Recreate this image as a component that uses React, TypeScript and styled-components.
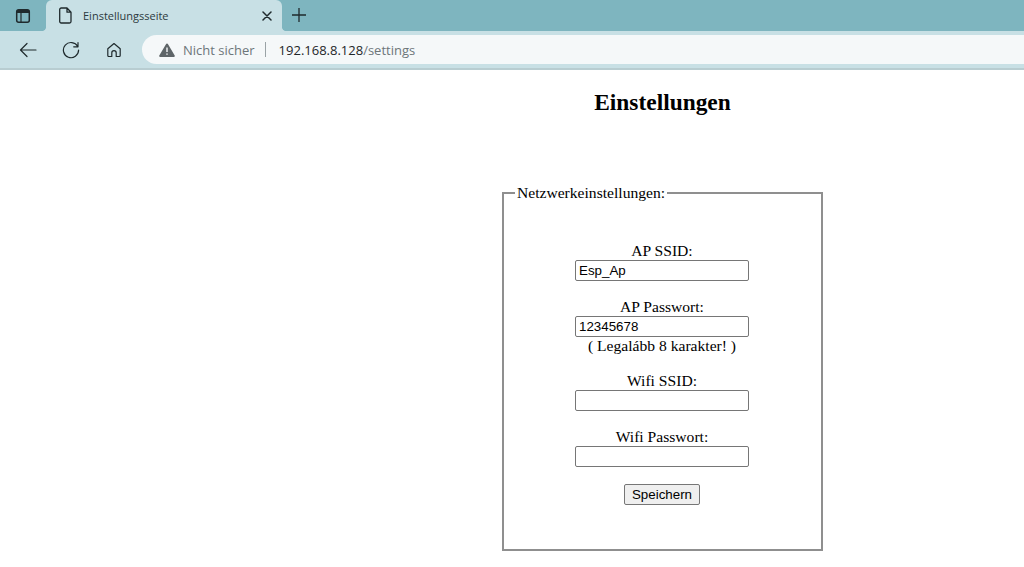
import React from "react";
import styled, { createGlobalStyle } from "styled-components";

const Global = createGlobalStyle`
  html, body { margin: 0; padding: 0; background: #fff; overflow: hidden; }
  #root { width: 1024px; height: 567px; overflow: hidden; }
`;

const Page = styled.div`
  width: 1024px;
  height: 567px;
  display: flex;
  flex-direction: column;
  background: #fff;
`;

const TabStrip = styled.div`
  height: 31px;
  flex: none;
  background: #7eb5bf;
  display: flex;
  align-items: stretch;
`;

const TabMenu = styled.div`
  width: 46px;
  flex: none;
  display: flex;
  align-items: center;
  justify-content: center;
  padding-right: 1px;
  box-sizing: border-box;
`;

const Tab = styled.div`
  position: relative;
  width: 236px;
  flex: none;
  background: #c8e0e5;
  border-radius: 6px 6px 0 0;
  display: flex;
  align-items: center;
  box-sizing: border-box;
  padding: 0 10px 0 13px;
  font: 11px "Open Sans", "Noto Sans", sans-serif;
  color: #2c3a3e;

  &::before,
  &::after {
    content: "";
    position: absolute;
    bottom: 0;
    width: 4px;
    height: 4px;
  }
  &::before {
    left: -4px;
    background: radial-gradient(circle at 0 0, #7eb5bf 3.6px, #c8e0e5 4.4px);
  }
  &::after {
    right: -4px;
    background: radial-gradient(circle at 100% 0, #7eb5bf 3.6px, #c8e0e5 4.4px);
  }
`;

const TabTitle = styled.span`
  margin-left: 11px;
  flex: 1;
`;

const NewTab = styled.div`
  width: 34px;
  display: flex;
  align-items: center;
  justify-content: center;
  padding-bottom: 2px;
`;

const Toolbar = styled.div`
  height: 37px;
  flex: none;
  background: #c8e0e5;
  display: flex;
  align-items: center;
  box-sizing: border-box;
  padding: 0 0 0 10px;
`;

const NavButton = styled.div`
  width: 36px;
  height: 32px;
  margin-right: 7px;
  display: flex;
  align-items: center;
  justify-content: center;
  flex: none;
`;

const Omnibox = styled.div`
  flex: 1;
  height: 29px;
  margin-left: 3px;
  background: #f5f8f9;
  border-radius: 15px 0 0 15px;
  display: flex;
  align-items: center;
  padding-left: 17px;
  font: 13px "Open Sans", "Noto Sans", sans-serif;
`;

const Insecure = styled.span`
  color: #6d7679;
  margin-left: 8px;
`;

const Divider = styled.span`
  width: 1px;
  height: 15px;
  background: #9aa3a6;
  margin: 0 13px 0 10px;
`;

const Host = styled.span`
  color: #1e2628;
`;

const UrlPath = styled.span`
  color: #6d7679;
`;

const ChromeEdge = styled.div`
  height: 2px;
  flex: none;
  background: #b8cdd1;
`;

const Content = styled.main`
  flex: 1;
  display: flex;
  flex-direction: column;
  align-items: center;
  padding-left: 301px;
  font: 15.6px/18px "Liberation Serif", "Times New Roman", serif;
  color: #000;
`;

const Title = styled.h1`
  font: bold 23.4px/27px "Liberation Serif", "Times New Roman", serif;
  margin: 19px 0 0;
  height: 95px;
`;

const Fieldset = styled.fieldset`
  width: 321px;
  height: 367px;
  box-sizing: border-box;
  margin: 0;
  padding: 0 1px 0 0;
  border: 2px solid #8f8f8f;
  display: flex;
  flex-direction: column;
  align-items: center;
  text-align: center;
`;

const Legend = styled.legend`
  padding: 0 2px;
  margin-left: 11px;
  text-align: left;
`;

const Form = styled.form`
  display: flex;
  flex-direction: column;
  align-items: center;
  padding-top: 40px;
`;

const Field = styled.div`
  display: flex;
  flex-direction: column;
  align-items: center;
  margin-bottom: 17px;
`;

const Label = styled.label`
  display: block;
  height: 18px;
`;

const Input = styled.input`
  width: 174px;
  height: 21px;
  box-sizing: border-box;
  border: 1px solid #767676;
  border-radius: 2px;
  padding: 1px 3px;
  margin: 0;
  font: 13.33px "Liberation Sans", Arial, sans-serif;
  color: #000;
  background: #fff;
  outline: none;
`;

const Hint = styled.div`
  height: 18px;
`;

const SaveButton = styled.button`
  width: 76px;
  height: 21px;
  box-sizing: border-box;
  border: 1px solid #767676;
  border-radius: 2px;
  background: #efefef;
  padding: 0;
  font: 13.33px "Liberation Sans", Arial, sans-serif;
  color: #000;
`;

const Stroke = { fill: "none", stroke: "#1f2a2d", strokeWidth: 1.3, strokeLinecap: "round", strokeLinejoin: "round" } as const;

export default function App() {
  return (
    <Page>
      <Global />
      <TabStrip>
        <TabMenu>
          <svg width="16" height="16" viewBox="0 0 16 16">
            <rect x="1.7" y="1.7" width="12.600" height="12.600" rx="2" {...Stroke} strokeWidth={1.5} />
            <path d="M2 2h12v3H2z" fill="#1f2a2d" />
            <path d="M6 5v9" {...Stroke} strokeWidth={1.2} />
          </svg>
        </TabMenu>
        <Tab>
          <svg width="13" height="17" viewBox="0 0 13 17">
            <path d="M2.200 1h5.800l4 4.200v9.300a1.500 1.500 0 0 1-1.500 1.500H2.200a1.500 1.500 0 0 1-1.500-1.500v-12A1.500 1.500 0 0 1 2.200 1zM8 1v4.200h4" {...Stroke} />
          </svg>
          <TabTitle>Einstellungsseite</TabTitle>
          <svg width="10" height="10" viewBox="0 0 10 10">
            <path d="M1 1l8 8M9 1l-8 8" {...Stroke} strokeWidth={1.5} />
          </svg>
        </Tab>
        <NewTab>
          <svg width="14" height="14" viewBox="0 0 14 14">
            <path d="M7 0v14M0 7h14" {...Stroke} strokeLinecap="butt" />
          </svg>
        </NewTab>
      </TabStrip>
      <Toolbar>
        <NavButton>
          <svg width="18" height="16" viewBox="0 0 18 16">
            <path d="M17 8H1.500M8 1.500L1.500 8 8 14.500" {...Stroke} strokeWidth={1.2} />
          </svg>
        </NavButton>
        <NavButton>
          <svg width="18" height="18" viewBox="0 0 18 18">
            <path d="M15.700 5.500A7.600 7.600 0 1 0 16.600 9M16 1.500v4.300h-4.300" {...Stroke} strokeWidth={1.2} />
          </svg>
        </NavButton>
        <NavButton>
          <svg width="16" height="16" viewBox="0 0 16 16">
            <path d="M5.800 14.500H2.800a1 1 0 0 1-1-1V6.700L8 1.500l6.200 5.200v6.800a1 1 0 0 1-1 1h-3V10.800a2.200 2.200 0 0 0-4.400 0z" {...Stroke} strokeWidth={1.2} />
          </svg>
        </NavButton>
        <Omnibox>
          <svg width="16" height="14" viewBox="0 0 16 14">
            <path d="M8 .5a1 1 0 0 1 .9.500l6.800 11.500a1 1 0 0 1-.9 1.500H1.200a1 1 0 0 1-.9-1.500L7.100 1A1 1 0 0 1 8 .5z" fill="#5e6568" />
            <path d="M8 4.500v4.500M8 10.500v1.300" stroke="#f5f8f9" strokeWidth="1.400" />
          </svg>
          <Insecure>Nicht sicher</Insecure>
          <Divider />
          <Host>192.168.8.128</Host>
          <UrlPath>/settings</UrlPath>
        </Omnibox>
      </Toolbar>
      <ChromeEdge />
      <Content>
        <Title>Einstellungen</Title>
        <Fieldset>
          <Legend>Netzwerkeinstellungen:</Legend>
          <Form>
            <Field>
              <Label>AP SSID:</Label>
              <Input defaultValue="Esp_Ap" />
            </Field>
            <Field>
              <Label>AP Passwort:</Label>
              <Input defaultValue="12345678" />
              <Hint>( Legalább 8 karakter! )</Hint>
            </Field>
            <Field>
              <Label>Wifi SSID:</Label>
              <Input />
            </Field>
            <Field>
              <Label>Wifi Passwort:</Label>
              <Input />
            </Field>
            <SaveButton type="button">Speichern</SaveButton>
          </Form>
        </Fieldset>
      </Content>
    </Page>
  );
}
